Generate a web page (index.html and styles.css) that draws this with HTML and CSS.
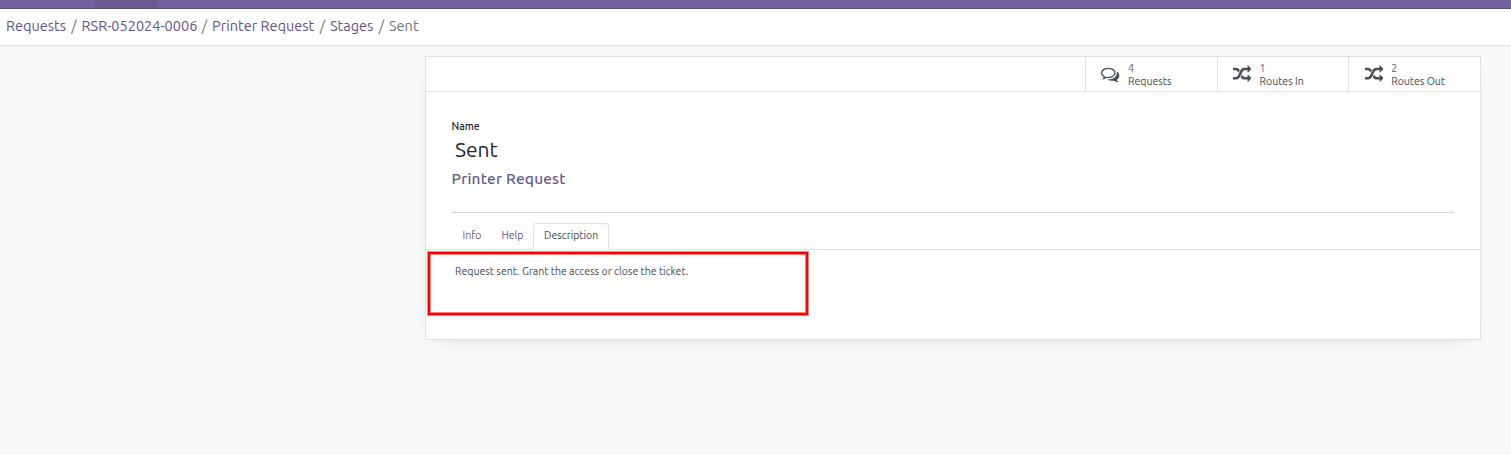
FILE: index.html
```
<!DOCTYPE html>
<html lang="en">
<head>
<meta charset="utf-8">
<title>Sent - Stages</title>
<link rel="stylesheet" href="styles.css">
</head>
<body>
<svg class="sprite" aria-hidden="true">
<symbol id="random" viewBox="0 0 1792 1792"><path d="M666 481q-60 92-137 273-22-45-37-72.5t-40.5-63.5-51-56.5-63-35-81.5-14.5h-224q-14 0-23-9t-9-23v-192q0-14 9-23t23-9h224q250 0 410 225zm1126 799q0 14-9 23l-320 320q-9 9-23 9-13 0-22.5-9.5t-9.5-22.5v-192q-32 0-85 .5t-81 1-73-1-71-5-64-10.5-63-18.5-58-28.5-59-40-55-53.5-56-69.5q59-93 136-273 22 45 37 72.5t40.5 63.5 51 56.5 63 35 81.5 14.5h256v-192q0-14 9-23t23-9q12 0 24 10l319 319q9 9 9 23zm0-896q0 14-9 23l-320 320q-9 9-23 9-13 0-22.5-9.5t-9.5-22.5v-192h-256q-48 0-87 15t-69 45-51 61.5-45 77.5q-32 62-78 171-29 66-49.5 111t-54 105-64 100-74 83-90 68.5-106.5 42-128 16.5h-224q-14 0-23-9t-9-23v-192q0-14 9-23t23-9h224q48 0 87-15t69-45 51-61.5 45-77.5q32-62 78-171 29-66 49.5-111t54-105 64-100 74-83 90-68.5 106.5-42 128-16.5h256v-192q0-14 9-23t23-9q12 0 24 10l319 319q9 9 9 23z"/></symbol>
<symbol id="comments" viewBox="0 0 1792 1792"><path d="M704 384q-153 0-286 52t-211.500 141-78.500 191q0 82 53 158t149 132l97 56-35 84q34-20 62-39l44-31 53 10q78 14 153 14 153 0 286-52t211.500-141 78.500-191-78.500-191-211.500-141-286-52zm0-128q191 0 353.500 68.500t256.500 186.500 94 257-94 257-256.500 186.500-353.500 68.500q-86 0-176-16-124 88-278 128-36 9-86 16h-3q-11 0-20.500-8t-11.500-21q-1-3-1-6.500t.5-6.500 2-6l2.500-5 3.500-5.500 4-5 4.500-5 4-4.500q5-6 23-25t26-29.500 22.500-29 25-38.500 20.500-44q-124-72-195-177t-71-224q0-139 94-257t256.500-186.500 353.500-68.500zm822 1169q10 24 20.500 44t25 38.500 22.500 29 26 29.500 23 25q1 1 4 4.500t4.500 5 4 5 3.500 5.500l2.500 5 2 6 .5 6.500-1 6.500q-3 14-13 22t-22 7q-50-7-86-16-154-40-278-128-90 16-176 16-271 0-472-132 58 4 88 4 161 0 309-45t264-129q125-92 192-212t67-254q0-77-23-152 129 71 204 178t75 230q0 120-71 224.500t-195 176.500z"/></symbol>
</svg>
<div class="navbar"><div class="navbar-active"></div></div>
<nav class="breadcrumb">
<a class="crumb crumb-requests">Requests</a><i class="slash">/</i><a class="crumb crumb-code">RSR-052024-0006</a><i class="slash">/</i><a class="crumb crumb-type">Printer Request</a><i class="slash">/</i><a class="crumb crumb-stages">Stages</a><i class="slash">/</i><span class="crumb crumb-current">Sent</span>
</nav>
<main class="content">
<section class="sheet">
<div class="button-box">
<div class="stat"><svg class="stat-icon"><use href="#comments"/></svg><div class="stat-info"><span class="stat-value">4</span><span class="stat-label">Requests</span></div></div>
<div class="stat"><svg class="stat-icon"><use href="#random"/></svg><div class="stat-info"><span class="stat-value">1</span><span class="stat-label">Routes In</span></div></div>
<div class="stat"><svg class="stat-icon"><use href="#random"/></svg><div class="stat-info"><span class="stat-value">2</span><span class="stat-label">Routes Out</span></div></div>
</div>
<div class="title">
<label class="name-label">Name</label>
<h1 class="name">Sent</h1>
<h3 class="type"><a>Printer Request</a></h3>
</div>
<div class="tabs"><a class="tab tab-info">Info</a><a class="tab tab-help">Help</a><a class="tab tab-active">Description</a></div>
<div class="highlight"><p class="description">Request sent. Grant the access or close the ticket.</p></div>
</section>
</main>
</body>
</html>
```
FILE: styles.css
```
* { box-sizing: border-box; }
body { margin: 0; height: 455px; overflow: hidden; background: #f8f9fa; color: #43494f; font: 11px/13px Ubuntu, "Noto Sans", sans-serif; white-space: nowrap; }
h1, h3, p { margin: 0; font-weight: 400; }
.sprite { display: none; }
.navbar { height: 9px; background: #71639e; border-bottom: 1px solid #5a4f7f; }
.navbar-active { width: 63px; height: 8px; margin-left: 95px; background: #685b92; }
.breadcrumb { display: flex; height: 37px; padding: 7px 0 0 6px; background: #fff; border-bottom: 1px solid #dee2e6; font-size: 14.500px; line-height: 20px; color: #6c757d; }
.crumb { color: #5f5289; }
.crumb-requests { width: 60.500px; }
.crumb-code { width: 115.500px; }
.crumb-type { width: 103px; }
.crumb-stages { width: 44px; }
.crumb-current { color: #6c757d; }
.slash { width: 15px; text-align: center; font-style: normal; }
.content { padding: 10px 30px 0 425px; }
.sheet { height: 284px; background: #fff; border: 1px solid #dee2e6; box-shadow: 0 5px 20px -15px rgba(0, 0, 0, .4); }
.button-box { display: flex; justify-content: flex-end; height: 35px; border-bottom: 1px solid #dee2e6; }
.stat { display: flex; width: 131.600px; padding: 5px 0 0 15px; border-left: 1px solid #dee2e6; }
.stat-icon { width: 18.500px; height: 18.500px; margin: 2.500px 8.200px 0 .1px; fill: #495057; }
.stat-info { display: flex; flex-direction: column; font-size: 10.500px; }
.stat-value { color: #5f5289; }
.title { height: 121px; margin: 0 26px; padding-top: 27px; border-bottom: 1px solid #ced4da; color: #212529; }
.name-label { display: block; height: 14px; margin-left: -.5px; font-size: 10.500px; font-weight: 500; line-height: 14px; }
.name { height: 34px; padding-left: 3px; font-size: 21px; line-height: 32px; }
.type { height: 24px; margin-left: -.5px; color: #66598f; font-size: 15.400px; font-weight: 500; line-height: 24px; letter-spacing: .22px; }
.tabs { display: flex; height: 37px; padding: 10px 0 0 26px; border-bottom: 1px solid #dee2e6; }
.tab { height: 27px; padding: 0 9.500px; border: 1px solid transparent; color: #5f5289; font-size: 10.500px; line-height: 23px; }
.tab-info { width: 39px; }
.tab-help { width: 42px; }
.tab-active { width: 76px; padding: 0 10px; color: #43494f; background: #fff; border-color: #dee2e6 #dee2e6 #fff; border-radius: 3px 3px 0 0; }
.highlight { width: 380px; height: 63px; margin: 2px 0 0 2px; padding: 10px 0 0 25px; border: 2px solid #f00; box-shadow: 0 0 0 1px rgba(255, 0, 0, .5), inset 0 0 0 1px rgba(255, 0, 0, .5); }
.description { font-size: 10.500px; line-height: 15px; }
```
